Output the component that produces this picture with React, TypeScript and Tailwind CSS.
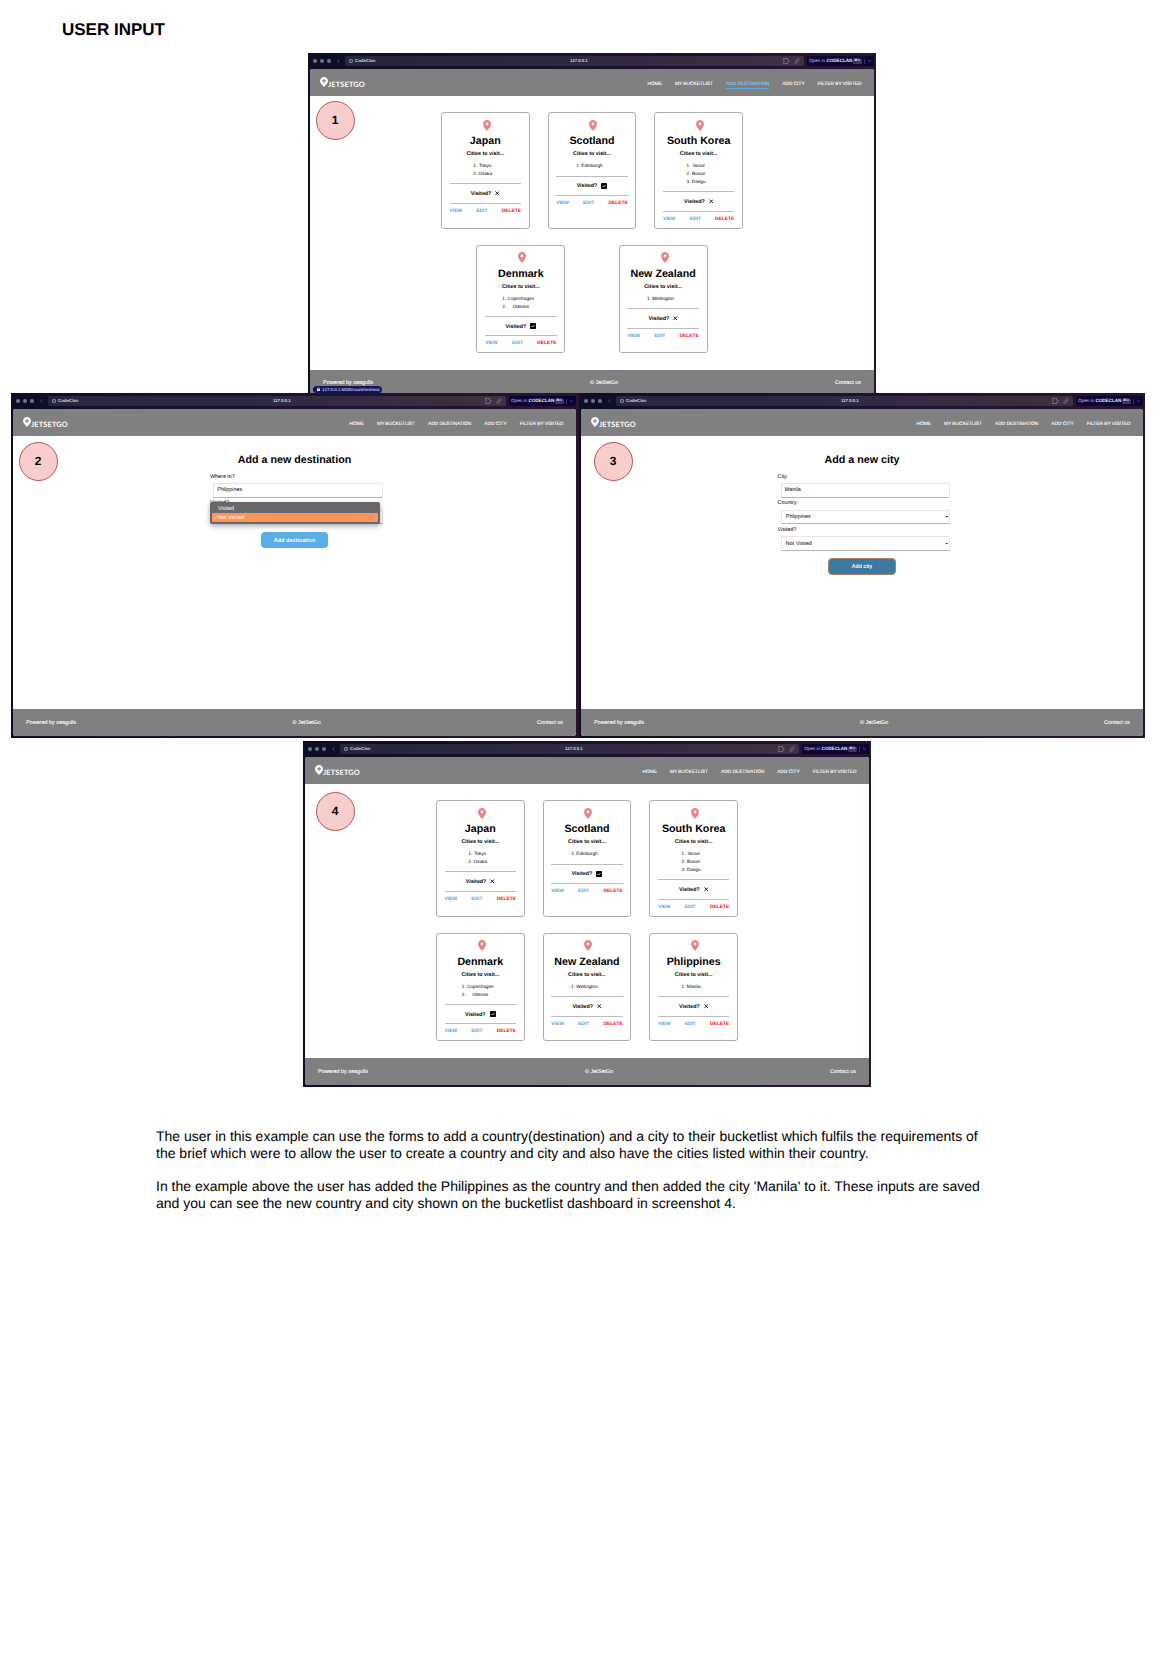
import type { ReactNode } from 'react';

type Country = { name: string; cities: string[]; visited: boolean };

const japan: Country = { name: 'Japan', cities: ['Tokyo', 'Osaka'], visited: false };
const scotland: Country = { name: 'Scotland', cities: ['Edinburgh'], visited: true };
const southKorea: Country = { name: 'South Korea', cities: ['Seoul', 'Busan', 'Daegu'], visited: false };
const denmark: Country = { name: 'Denmark', cities: ['Copenhagen', 'Odense'], visited: true };
const newZealand: Country = { name: 'New Zealand', cities: ['Wellington'], visited: false };
const philippines: Country = { name: 'Phlippines', cities: ['Manila'], visited: false };

const navItems = ['HOME', 'MY BUCKETLIST', 'ADD DESTINATION', 'ADD CITY', 'FILTER BY VISITED'];

function Pin({ className }: { className: string }) {
  return (
    <svg viewBox="0 0 16 22" className={className} fill="currentColor">
      <path
        fillRule="evenodd"
        d="M8 0C3.6 0 0 3.5 0 7.9 0 13.5 8 22 8 22s8-8.500 8-14.100C16 3.500 12.400 0 8 0zm0 5.200a2.800 2.800 0 1 1 0 5.600 2.800 2.800 0 0 1 0-5.600z"
      />
    </svg>
  );
}

function LogoPin() {
  return (
    <svg viewBox="0 0 16 20" className="-mt-px h-[10px] w-[8px] shrink-0">
      <path d="M8 0C3.600 0 0 3.500 0 7.900 0 12.500 4.500 15.500 8 20c3.500-4.500 8-7.500 8-12.100C16 3.500 12.400 0 8 0z" fill="#fff" />
      <path d="M8 3.800v8M4 7.800h8" stroke="#777" strokeWidth="2" fill="none" />
    </svg>
  );
}

function TitleBar() {
  return (
    <div className="flex h-4 shrink-0 items-center pl-[3px]">
      <div className="flex w-[18px] shrink-0 justify-between">
        <span className="size-1 rounded-full bg-[#777783]" />
        <span className="size-1 rounded-full bg-[#777783]" />
        <span className="size-1 rounded-full bg-[#777783]" />
      </div>
      <svg viewBox="0 0 4 6" className="ml-[6px] h-1 w-[3px] shrink-0" fill="none" stroke="#6f6f82" strokeWidth="1">
        <path d="M3.200.500.800 3l2.400 2.500" />
      </svg>
      <div className="ml-[5px] flex h-[10px] flex-1 items-center rounded-[2px] bg-linear-to-r from-[#26263d] via-[#2f2941] to-[#41303f] px-[4px] leading-none text-[#d4d4dc]">
        <div className="flex w-[221px] items-center gap-[2px] text-[4.400px] font-bold">
          <svg viewBox="0 0 8 8" className="size-[4px]" fill="none" stroke="#b5b5c2" strokeWidth="1.200">
            <rect x="1" y="1" width="6" height="6" rx="1" />
            <path d="M2.500 4h3" />
          </svg>
          <span className="pt-px">CodeClan</span>
        </div>
        <span className="pt-px text-[4.400px] tracking-[-0.020em] font-bold">127.0.0.1</span>
        <div className="ml-auto flex items-center justify-end gap-[4px]">
          <svg viewBox="0 0 14 12" className="h-[6px] w-[7px]" fill="none" stroke="#85798a" strokeWidth="1.600">
            <path d="M1 1h8v3l3 1v3l-3 1v2H1V8l2-2-2-2z" />
          </svg>
          <svg viewBox="0 0 12 12" className="size-[6px]" fill="none" stroke="#85798a" strokeWidth="1.600">
            <path d="M5 3.500l2-2c2-1.500 4.500 1 3 3l-3 3c-1 1-2.500.500-3-.500M7 8.500l-2 2c-2 1.500-4.500-1-3-3l3-3c1-1 2.500-.500 3 .500" />
          </svg>
        </div>
      </div>
      <div className="ml-[3px] flex h-[10px] w-[67px] shrink-0 items-center rounded-[2px] bg-[#0a0436] pl-[2px] text-[4.600px] leading-none whitespace-nowrap text-[#d0cee6]">
        <span className="w-[43.500px] pt-px">
          Open in <b className="text-[#f0eefa]">CODECLAN</b>
        </span>
        <span className="flex h-[5px] w-[9px] items-center justify-center rounded-[1px] bg-[#3b3760] text-[3.500px] font-bold">⌘O</span>
        <span className="ml-[2px] h-[5px] w-px bg-[#35315a]" />
        <svg viewBox="0 0 6 4" className="ml-[3px] h-[2px] w-[3px]" fill="none" stroke="#a5a2c4">
          <path d="M.500.500 3 3 5.500.500" />
        </svg>
      </div>
    </div>
  );
}

function BrowserWindow({ className, active, children }: { className: string; active?: string; children: ReactNode }) {
  return (
    <section className={`flex shrink-0 flex-col bg-linear-to-r from-[#0c0e25] via-[#1c1230] to-[#29132f] px-[2px] ${className}`}>
      <TitleBar />
      <div className="flex min-h-0 flex-1 flex-col overflow-hidden rounded-[3px] bg-white">
        <header className="flex h-[27px] shrink-0 items-center justify-between bg-[#808080] pr-[12.500px] pl-[10px] text-white">
          <div className="flex items-center">
            <LogoPin />
            <span className="mt-[4px] font-['Lato'] text-[7.400px] leading-none font-bold tracking-[0.020em]">JETSETGO</span>
          </div>
          <nav className="mt-[5px] flex gap-[13px] text-[4.800px] leading-none whitespace-nowrap [-webkit-text-stroke:0.1px_currentColor]">
            {navItems.map((item) => (
              <a
                key={item}
                className={
                  item === active
                    ? 'relative text-[#86d0ee] after:absolute after:inset-x-0 after:top-[5px] after:h-px after:bg-[#59aee6]'
                    : ''
                }
              >
                {item}
              </a>
            ))}
          </nav>
        </header>
        <main className="min-h-0 flex-1">{children}</main>
        <footer className="flex h-[27px] shrink-0 items-center justify-between bg-[#808080] px-[13px] pt-[2px] text-[5.450px] leading-none text-white [-webkit-text-stroke:0.1px_currentColor]">
          <span>Powered by seagulls</span>
          <span>© JetSetGo</span>
          <span>Contact us</span>
        </footer>
      </div>
    </section>
  );
}

function VisitedMark({ visited }: { visited: boolean }) {
  return visited ? (
    <svg viewBox="0 0 12 12" className="-mt-px size-[6px]">
      <rect width="12" height="12" rx="1.500" fill="#000" />
      <path d="M3 6.200l2 2 4-4.400" stroke="#fff" strokeWidth="1.600" fill="none" />
    </svg>
  ) : (
    <svg viewBox="0 0 8 8" className="-mt-[1.500px] size-[4.500px]">
      <path d="M.800.800l6.400 6.400M7.200.800.800 7.200" stroke="#000" strokeWidth="1.500" />
    </svg>
  );
}

function Card({ country }: { country: Country }) {
  return (
    <article className="flex w-[88.800px] flex-col items-center rounded-[3px] border border-[#aeaeae] px-[7.700px] pt-[6.500px] pb-[5px] text-black">
      <Pin className="ml-[3px] h-[11px] w-[8px] text-[#f08080]" />
      <h2 className="mt-[3.500px] text-[10.700px] leading-[14px] font-bold whitespace-nowrap">{country.name}</h2>
      <h3 className="mt-[2px] text-[5.350px] leading-[8px] font-bold">Cities to visit...</h3>
      <ol className="mt-[4.200px] list-outside list-decimal text-center text-[4.670px] leading-[7.800px]">
        {country.cities.map((city) => (
          <li key={city}>{city}</li>
        ))}
      </ol>
      <div className="mt-[5.700px] h-px w-full shrink-0 bg-[#bdbdbd]" />
      <p className="mt-[5.800px] flex items-center gap-[4px] text-[5.350px] leading-[8px] font-bold">
        Visited? <VisitedMark visited={country.visited} />
      </p>
      <div className="mt-[4.500px] h-px w-full shrink-0 bg-[#bdbdbd]" />
      <div className="mt-[4px] flex w-full justify-between text-[4.900px] leading-[7px] font-bold text-[#4ba7e3]">
        <a>VIEW</a>
        <a>EDIT</a>
        <a className="text-[#ff0a0a]">DELETE</a>
      </div>
    </article>
  );
}

function Board({ rows }: { rows: Country[][] }) {
  return (
    <div className="mx-auto flex w-[338px] flex-col gap-[16px] pt-[16px]">
      {rows.map((row) => (
        <div key={row[0].name} className="flex justify-evenly">
          {row.map((country) => (
            <Card key={country.name} country={country} />
          ))}
        </div>
      ))}
    </div>
  );
}

function Field({ label, value, select }: { label: string; value: string; select?: boolean }) {
  return (
    <div className="h-[26.700px]">
      <div className="h-[9.500px] text-[5.400px] leading-[7px]">{label}</div>
      <div
        className={`ml-[3.300px] flex h-[14.500px] w-[169.500px] items-center justify-between rounded-[1px] border border-[#e6e6e6] border-b-[#b5b5b5] pr-[1px] text-[5.400px] leading-none ${select ? 'pl-[4px]' : 'pl-[3px]'}`}
      >
        <span className="pt-[1.500px]">{value}</span>
        {select && (
          <svg viewBox="0 0 4 2" className="h-[1.500px] w-[3.500px]">
            <path d="M0 0h4L2 2z" fill="#333" />
          </svg>
        )}
      </div>
    </div>
  );
}

function Step({ n, className }: { n: number; className: string }) {
  return (
    <div
      className={`absolute z-10 flex size-[39px] items-center justify-center rounded-full border border-[#b85450] bg-[#f8cecc] pr-px pb-px text-[12px] leading-none font-bold ${className}`}
    >
      {n}
    </div>
  );
}

export default function App() {
  return (
    <div className="h-[1654px] w-[1169px] overflow-hidden bg-white font-['Liberation_Sans',Arial,sans-serif] text-black [text-rendering:geometricPrecision]">
      <h1 className="h-[53px] pt-[20px] pl-[62px] text-[17px] leading-[20px] font-bold">USER INPUT</h1>

      <div className="relative ml-[308px] h-[340px] w-[568px]">
        <BrowserWindow className="h-[343.500px] w-[568px]" active="ADD DESTINATION">
          <Board
            rows={[
              [japan, scotland, southKorea],
              [denmark, newZealand],
            ]}
          />
        </BrowserWindow>
        <Step n={1} className="top-[48px] left-[8px]" />
        <div className="absolute top-[332.500px] left-[5px] flex h-[7.500px] w-[69px] items-center gap-[2.500px] rounded-full bg-[#15155c] pl-[3.500px] text-[4.400px] leading-none whitespace-nowrap text-[#f0f0fc]">
          <svg viewBox="0 0 6 8" className="h-[4px] w-[3px]">
            <path d="M1.500 4V2.500a1.500 1.500 0 0 1 3 0V4" stroke="#dcdcf2" fill="none" />
            <rect y="3.500" width="6" height="4.500" fill="#dcdcf2" />
          </svg>
          <span className="pt-px">127.0.0.1:5000/countries/new</span>
        </div>
      </div>

      <div className="relative ml-[11px] flex h-[345.500px] w-[1134px] items-start">
        <div className="relative">
          <BrowserWindow className="h-[345px] w-[568px] pr-[3px] pb-[2px]">
            <div className="mx-auto w-[169px] pt-[17px]">
              <h2 className="text-center text-[10.700px] leading-[15px] font-bold whitespace-nowrap">Add a new destination</h2>
              <div className="relative pt-[5.500px]">
                <Field label="Where to?" value="Phlippines" />
                <Field label="Visited?" value="Not Visited" select />
                <div className="absolute top-[34px] left-0 flex h-[21.500px] w-[169.500px] flex-col rounded-[2px] bg-[#67686a] px-[2px] pt-[2px] text-[5.400px] text-white shadow-[0_2px_5px_rgba(0,0,0,0.350)]">
                  <div className="h-[9px] pl-[6px] leading-[10px]">Visited</div>
                  <div className="flex h-[9px] items-center gap-[1.500px] rounded-[1px] bg-[#fa965a] pl-[1.500px] leading-[10px]">
                    <svg viewBox="0 0 6 6" className="size-[3px]" fill="none" stroke="#fff">
                      <path d="M.500 3.500 2 5.500 5.500.500" />
                    </svg>
                    <span className="pt-px">Not Visited</span>
                  </div>
                </div>
              </div>
              <button className="mx-auto mt-[5px] block h-[16px] w-[67px] rounded-[4px] bg-[#59aee6] pt-px text-[5.500px] leading-none font-bold text-white">
                Add destination
              </button>
            </div>
          </BrowserWindow>
          <Step n={2} className="top-[49px] left-[8px]" />
        </div>
        <div className="relative">
          <BrowserWindow className="h-[345px] w-[566px] pb-[2px]">
            <div className="mx-auto w-[169px] pt-[17px]">
              <h2 className="text-center text-[10.700px] leading-[15px] font-bold whitespace-nowrap">Add a new city</h2>
              <div className="pt-[5.500px]">
                <Field label="City:" value="Manila" />
                <Field label="Country:" value="Phlippines" select />
                <Field label="Visited?" value="Not Visited" select />
              </div>
              <button className="mx-auto mt-[4.500px] block h-[17px] w-[68px] rounded-[4px] border border-[#b07c62] bg-[#3c7aa1] pt-px text-[5.200px] leading-none font-bold text-white">
                Add city
              </button>
            </div>
          </BrowserWindow>
          <Step n={3} className="top-[49px] left-[15px]" />
        </div>
      </div>

      <div className="relative mt-[2.500px] ml-[303px] w-[568px]">
        <BrowserWindow className="h-[346px] w-[568px] pb-[2px]">
          <Board
            rows={[
              [japan, scotland, southKorea],
              [denmark, newZealand, philippines],
            ]}
          />
        </BrowserWindow>
        <Step n={4} className="top-[51px] left-[13px]" />
      </div>

      <div className="mt-[41px] ml-[156px] text-[14px] leading-[16.800px] whitespace-nowrap">
        <p>
          The user in this example can use the forms to add a country(destination) and a city to their bucketlist which fulfils the requirements of
          <br />
          the brief which were to allow the user to create a country and city and also have the cities listed within their country.
        </p>
        <p className="mt-[16.800px]">
          In the example above the user has added the Philippines as the country and then added the city 'Manila' to it. These inputs are saved
          <br />
          and you can see the new country and city shown on the bucketlist dashboard in screenshot 4.
        </p>
      </div>
    </div>
  );
}
